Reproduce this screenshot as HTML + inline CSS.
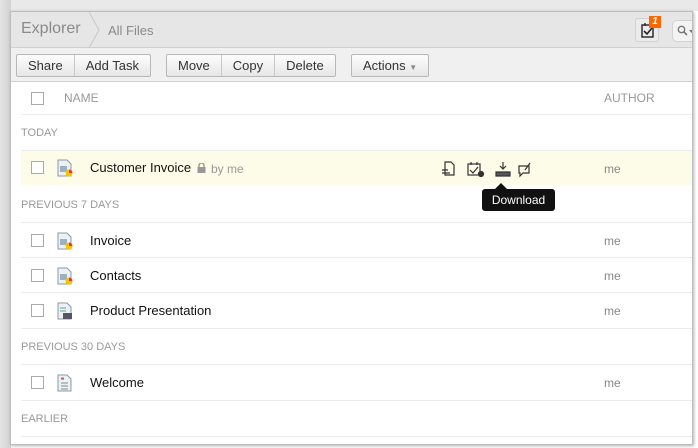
<!DOCTYPE html>
<html><head><style>
*{margin:0;padding:0;box-sizing:border-box}
body{width:698px;height:448px;background:#fff;font-family:"Liberation Sans",sans-serif;position:relative;overflow:hidden}
.outer{position:absolute;left:0;top:0;width:698px;height:448px;background:#fff}
.topstrip{position:absolute;left:0;top:0;width:698px;height:11px;background:#e9e9e9}
.leftstrip{position:absolute;left:0;top:0;width:11px;height:448px;background:linear-gradient(90deg,#e4e4e4,#d2d2d2)}
.panel{position:absolute;left:10px;top:11px;width:683px;height:434px;border:1px solid #bdbdbd;background:#fff;box-shadow:1px 1px 3px rgba(0,0,0,.3);overflow:hidden}
.hdr{position:absolute;left:0;top:0;width:100%;height:36px;background:#e6e6e6;border-bottom:1px solid #cfcfcf}
.hdr .ex{position:absolute;left:10px;top:8px;font-size:16px;color:#8a8a8a}
.hdr .af{position:absolute;left:97px;top:11px;font-size:13px;color:#8a8a8a}
.chev{position:absolute;left:76px;top:0;width:14px;height:36px}
.tb{position:absolute;left:0;top:36px;width:100%;height:34px;background:#f0f0f0;border-bottom:1px solid #cfcfcf}
.grp{position:absolute;top:6px;height:23px;display:flex;border:1px solid #b8b8b8;border-radius:2px;background:linear-gradient(#fdfdfd,#e6e6e6)}
.grp span{font-size:13px;color:#333;padding:0 11px;line-height:21px;border-left:1px solid #c8c8c8}
.grp span:first-child{border-left:none}
.t{position:absolute;font-size:13px;color:#111}
.g{position:absolute;font-size:12px;color:#999}
.cb{position:absolute;left:20px;width:13px;height:13px;border:1px solid #aaa;background:#fff}
.ln{position:absolute;left:10px;right:0;height:1px;background:#ececec}
.me{position:absolute;left:593px;font-size:12px;color:#888}
.ic{position:absolute;left:46px;width:16px;height:18px}
</style></head><body>
<div class="outer"></div><div class="topstrip"></div><div class="leftstrip"></div>
<div class="panel">
<div class="hdr">
<div class="ex">Explorer</div>
<svg class="chev" viewBox="0 0 14 36"><path d="M2 0 L12 18 L2 36" fill="none" stroke="#c8c8c8" stroke-width="1"/></svg>
<div class="af">All Files</div>
<div style="position:absolute;left:624px;top:6px;width:24px;height:24px;border:1px solid #d2d2d2;border-radius:3px;background:#ebebeb"></div>
<svg style="position:absolute;left:630px;top:11px" width="14" height="15" viewBox="0 0 14 15"><rect x="1" y="2" width="11" height="12" fill="none" stroke="#222" stroke-width="1.4"/><path d="M3 8 L6 11 L11 5" fill="none" stroke="#222" stroke-width="1.6"/><path d="M4 0v3M9 0v3" stroke="#222" stroke-width="1.3"/></svg>
<div style="position:absolute;left:638px;top:4px;width:12px;height:12px;background:#f60;color:#fff;font-size:10px;font-weight:bold;font-style:italic;text-align:center;line-height:12px">1</div>
<div style="position:absolute;left:661px;top:8px;width:30px;height:22px;border:1px solid #d2d2d2;border-radius:5px;background:#f3f3f3"></div>
<svg style="position:absolute;left:666px;top:13px" width="18" height="12" viewBox="0 0 18 12"><circle cx="4.5" cy="4.5" r="3.2" fill="none" stroke="#777" stroke-width="1.4"/><path d="M7 7l3 3" stroke="#777" stroke-width="1.6"/><path d="M12 5h5l-2.5 3z" fill="#777"/></svg>
</div>
<div class="tb">
<div class="grp" style="left:5px"><span>Share</span><span>Add Task</span></div>
<div class="grp" style="left:155px"><span>Move</span><span>Copy</span><span>Delete</span></div>
<div class="grp" style="left:340px"><span>Actions <small style="font-size:8px;color:#888">▼</small></span></div>
</div>
<div class="cb" style="top:80px"></div>
<div class="g" style="left:53px;top:79px;font-size:12px">NAME</div>
<div class="g" style="left:593px;top:79px;font-size:12px">AUTHOR</div>
<div class="ln" style="top:102px"></div>
<div class="g" style="left:10px;top:115px;font-size:11px">TODAY</div>
<div class="ln" style="top:138px"></div>
<div style="position:absolute;left:10px;right:0;top:139px;height:34px;background:#fdfce8"></div>
<div class="cb" style="top:149px"></div>
<svg class="ic" style="top:147px" viewBox="0 0 16 18"><path d="M1 1h9l4 4v12H1z" fill="#eef1f4" stroke="#8a98a8"/><rect x="3" y="7" width="7" height="6" fill="#9cb0c4"/><circle cx="12" cy="14" r="3.5" fill="#f5c400"/><path d="M12 14V10.5A3.5 3.5 0 0 1 15.5 14z" fill="#e33"/></svg>
<div class="t" style="left:79px;top:148px">Customer Invoice</div>
<svg style="position:absolute;left:186px;top:151px" width="9" height="10" viewBox="0 0 9 10"><rect x="0.5" y="4" width="8" height="6" fill="#999"/><path d="M2 4V2.5a2.5 2.5 0 0 1 5 0V4" fill="none" stroke="#999" stroke-width="1.4"/></svg>
<div class="g" style="left:200px;top:150px">by me</div>
<svg style="position:absolute;left:430px;top:148px" width="110" height="18" viewBox="0 0 110 18" fill="none" stroke="#333" stroke-width="1.2"><path d="M4 2h6l3 3v10H4z"/><path d="M1 10h6M1 13h8"/><rect x="27" y="4" width="12" height="11"/><path d="M30 2v3M36 2v3M29 10l3 3 5-6"/><circle cx="40" cy="14" r="2.5" fill="#333"/><path d="M55 12h14v4H55z" fill="#555"/><path d="M62 2v7M59 6l3 3 3-3"/><path d="M78 6h10v7h-6l-3 3v-3h-1z"/><path d="M84 10l5-7"/></svg>
<div class="me" style="top:150px">me</div>
<div style="position:absolute;left:471px;top:177px;width:73px;height:22px;background:#111;border-radius:3px;color:#fff;font-size:12px;text-align:center;line-height:22px">Download</div>
<div style="position:absolute;left:484px;top:171px;width:0;height:0;border-left:6px solid transparent;border-right:6px solid transparent;border-bottom:6px solid #111"></div>
<div class="g" style="left:10px;top:187px;font-size:11px">PREVIOUS 7 DAYS</div>
<div class="ln" style="top:210px"></div>
<div class="cb" style="top:222px"></div>
<svg class="ic" style="top:220px" viewBox="0 0 16 18"><path d="M1 1h9l4 4v12H1z" fill="#eef1f4" stroke="#8a98a8"/><rect x="3" y="7" width="7" height="6" fill="#9cb0c4"/><circle cx="12" cy="14" r="3.5" fill="#f5c400"/><path d="M12 14V10.5A3.5 3.5 0 0 1 15.5 14z" fill="#e33"/></svg>
<div class="t" style="left:79px;top:221px">Invoice</div><div class="me" style="top:222px">me</div>
<div class="ln" style="top:245px"></div>
<div class="cb" style="top:257px"></div>
<svg class="ic" style="top:255px" viewBox="0 0 16 18"><path d="M1 1h9l4 4v12H1z" fill="#eef1f4" stroke="#8a98a8"/><rect x="3" y="7" width="7" height="6" fill="#9cb0c4"/><circle cx="12" cy="14" r="3.5" fill="#f5c400"/><path d="M12 14V10.5A3.5 3.5 0 0 1 15.5 14z" fill="#e33"/></svg>
<div class="t" style="left:79px;top:256px">Contacts</div><div class="me" style="top:257px">me</div>
<div class="ln" style="top:280px"></div>
<div class="cb" style="top:292px"></div>
<svg class="ic" style="top:290px" viewBox="0 0 16 18"><path d="M1 1h9l4 4v12H1z" fill="#eef1f4" stroke="#8a98a8"/><path d="M3 6h6M3 9h6" stroke="#5a8"/><rect x="6" y="11" width="9" height="6" fill="#556"/></svg>
<div class="t" style="left:79px;top:291px">Product Presentation</div><div class="me" style="top:292px">me</div>
<div class="ln" style="top:316px"></div>
<div class="g" style="left:10px;top:329px;font-size:11px">PREVIOUS 30 DAYS</div>
<div class="ln" style="top:352px"></div>
<div class="cb" style="top:364px"></div>
<svg class="ic" style="top:362px" viewBox="0 0 16 18"><path d="M1 1h9l4 4v12H1z" fill="#eef1f4" stroke="#8a98a8"/><path d="M4 4h3M4 9h7M4 12h7M4 15h7" stroke="#888"/><path d="M4 5h3" stroke="#e33"/></svg>
<div class="t" style="left:79px;top:363px">Welcome</div><div class="me" style="top:364px">me</div>
<div class="ln" style="top:388px"></div>
<div class="g" style="left:10px;top:401px;font-size:11px">EARLIER</div>
<div class="ln" style="top:424px"></div>
</div>
</body></html>
